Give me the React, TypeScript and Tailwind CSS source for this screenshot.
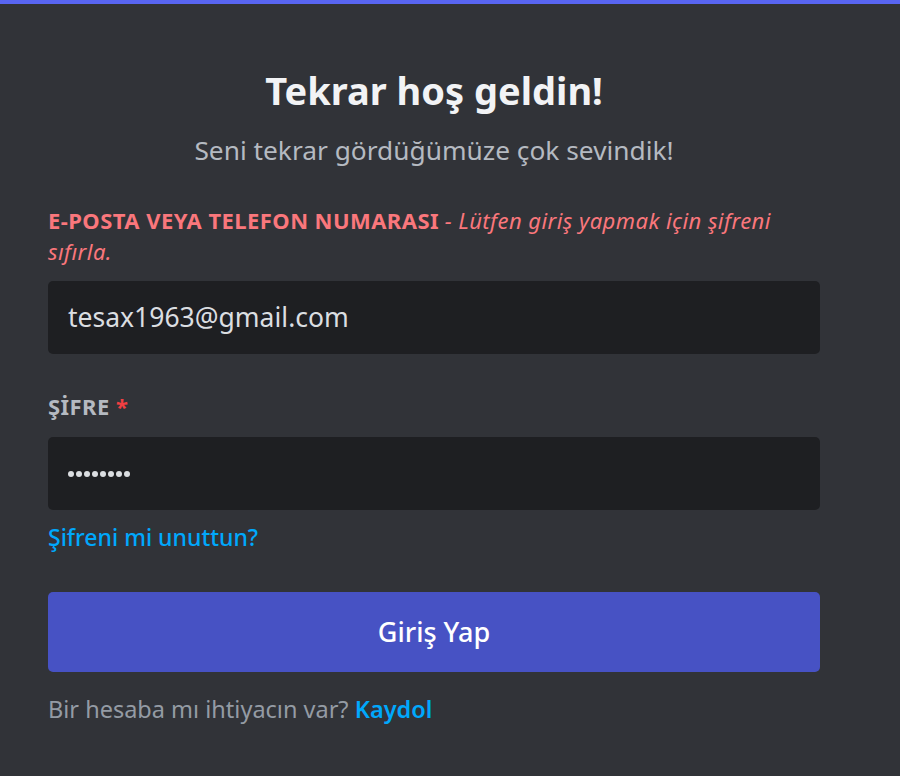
function App() {
  return (
    <div className="min-h-screen bg-[#313338] font-['Noto_Sans',sans-serif]">
      <div className="h-[4px] bg-[#5865f2]" />
      <div className="pl-[48px] pr-[80px]">
        <h1 className="mt-[62px] text-center text-[38px] font-bold leading-[48px] text-[#f2f3f5]">
          Tekrar hoş geldin!
        </h1>
        <p className="mt-[20px] text-center text-[26.3px] leading-[32px] text-[#b5bac1]">
          Seni tekrar gördüğümüze çok sevindik!
        </p>

        <label className="mt-[39px] block text-[22px] leading-[31px] text-[#fa777c]">
          <span className="font-bold uppercase tracking-[0.02em]">E-posta veya telefon numarası</span>{' '}
          <span className="italic tracking-[0.02em]">- Lütfen giriş yapmak için şifreni</span>
          <br />
          <span className="italic tracking-[0.02em]">sıfırla.</span>
        </label>
        <div className="mt-[14px] flex h-[73px] items-center rounded-[5px] bg-[#1e1f22] px-[20px] text-[26.5px] text-[#dbdee1]">
          tesax1963@gmail.com
        </div>

        <label className="mt-[37px] block text-[22px] leading-[31px] font-bold tracking-[0.02em] text-[#b5bac1]">
          ŞİFRE <span className="text-[#f23f42]">*</span>
        </label>
        <div className="mt-[15px] flex h-[73px] items-center gap-[2px] rounded-[5px] bg-[#1e1f22] px-[20px]">
          {Array.from({ length: 8 }).map((_, i) => (
            <span key={i} className="h-[6px] w-[6px] rounded-full bg-[#dbdee1]" />
          ))}
        </div>

        <a className="mt-[12px] block text-[23px] leading-[30px] font-medium text-[#00a8fc]">
          Şifreni mi unuttun?
        </a>

        <button className="mt-[40px] flex h-[80px] w-full items-center justify-center rounded-[5px] bg-[#4752c4] text-[27px] font-medium text-white">
          Giriş Yap
        </button>

        <p className="mt-[22px] text-[23.5px] leading-[30px] text-[#949ba4]">
          Bir hesaba mı ihtiyacın var? <span className="font-semibold text-[#00a8fc]">Kaydol</span>
        </p>
      </div>
    </div>
  )
}

export default App
